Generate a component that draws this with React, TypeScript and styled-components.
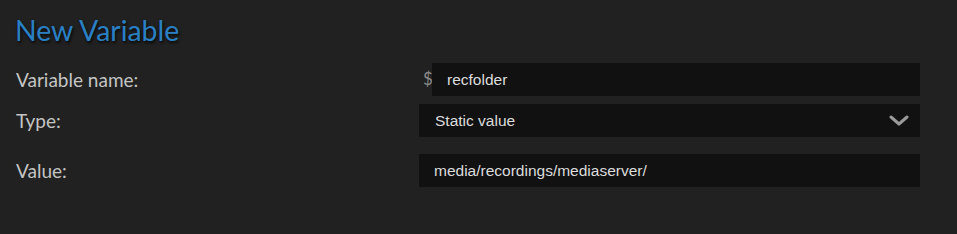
import * as React from "react";
import styled, { createGlobalStyle } from "styled-components";

const GlobalStyle = createGlobalStyle`
  html, body {
    margin: 0;
    padding: 0;
    background: #212121;
  }
`;

const Container = styled.section`
  height: 234px;
  box-sizing: border-box;
  padding: 12px 37px 0 16px;
  background: #212121;
  font-family: Lato, "Open Sans", sans-serif;
`;

const Title = styled.h1`
  margin: 0 0 0 -1px;
  font-weight: 400;
  font-size: 28.4px;
  line-height: 36px;
  color: #2a80c4;
  text-shadow: 1px 2px 3px rgba(0, 0, 0, 0.8);
`;

const Form = styled.div`
  display: grid;
  grid-template-columns: 403px 1fr;
  align-items: center;
  row-gap: 8px;
  margin-top: 15px;
`;

const Label = styled.label<{ $spaced?: boolean }>`
  font-size: 19px;
  color: #c4c4c4;
  margin-top: ${p => (p.$spaced ? "9px" : "0")};
`;

const Field = styled.div<{ $spaced?: boolean }>`
  display: flex;
  align-items: center;
  margin-top: ${p => (p.$spaced ? "9px" : "0")};
`;

const Prefix = styled.span`
  width: 13px;
  flex: none;
  font-family: Lato, sans-serif;
  font-size: 17px;
  color: #8a8a8a;
  padding-left: 4px;
  margin-top: -3px;
  box-sizing: border-box;
`;

const Input = styled.input`
  flex: 1;
  min-width: 0;
  height: 33px;
  box-sizing: border-box;
  border: none;
  outline: none;
  background: #111111;
  color: #dcdcdc;
  font-family: "Liberation Sans", Arial, sans-serif;
  font-size: 15.5px;
  padding: 0 16px 0 15px;
`;

const SelectBox = styled.div`
  flex: 1;
  height: 33px;
  display: flex;
  align-items: center;
  justify-content: space-between;
  background: #111111;
  color: #dcdcdc;
  font-family: "Liberation Sans", Arial, sans-serif;
  font-size: 15.5px;
  padding: 0 11px 0 16px;
`;

function Chevron() {
  return (
    <svg width="20" height="12" viewBox="0 0 20 12">
      <path
        d="M2 2 L10 9 L18 2"
        fill="none"
        stroke="#9a9a9a"
        strokeWidth="3"
        strokeLinecap="round"
        strokeLinejoin="round"
      />
    </svg>
  );
}

export default function App() {
  const [name, setName] = React.useState("recfolder");
  const [value, setValue] = React.useState("media/recordings/mediaserver/");

  return (
    <Container>
      <GlobalStyle />
      <Title>New Variable</Title>
      <Form>
        <Label>Variable name:</Label>
        <Field>
          <Prefix>$</Prefix>
          <Input value={name} onChange={e => setName(e.target.value)} />
        </Field>
        <Label>Type:</Label>
        <Field>
          <SelectBox>
            <span>Static value</span>
            <Chevron />
          </SelectBox>
        </Field>
        <Label $spaced>Value:</Label>
        <Field $spaced>
          <Input value={value} onChange={e => setValue(e.target.value)} />
        </Field>
      </Form>
    </Container>
  );
}
